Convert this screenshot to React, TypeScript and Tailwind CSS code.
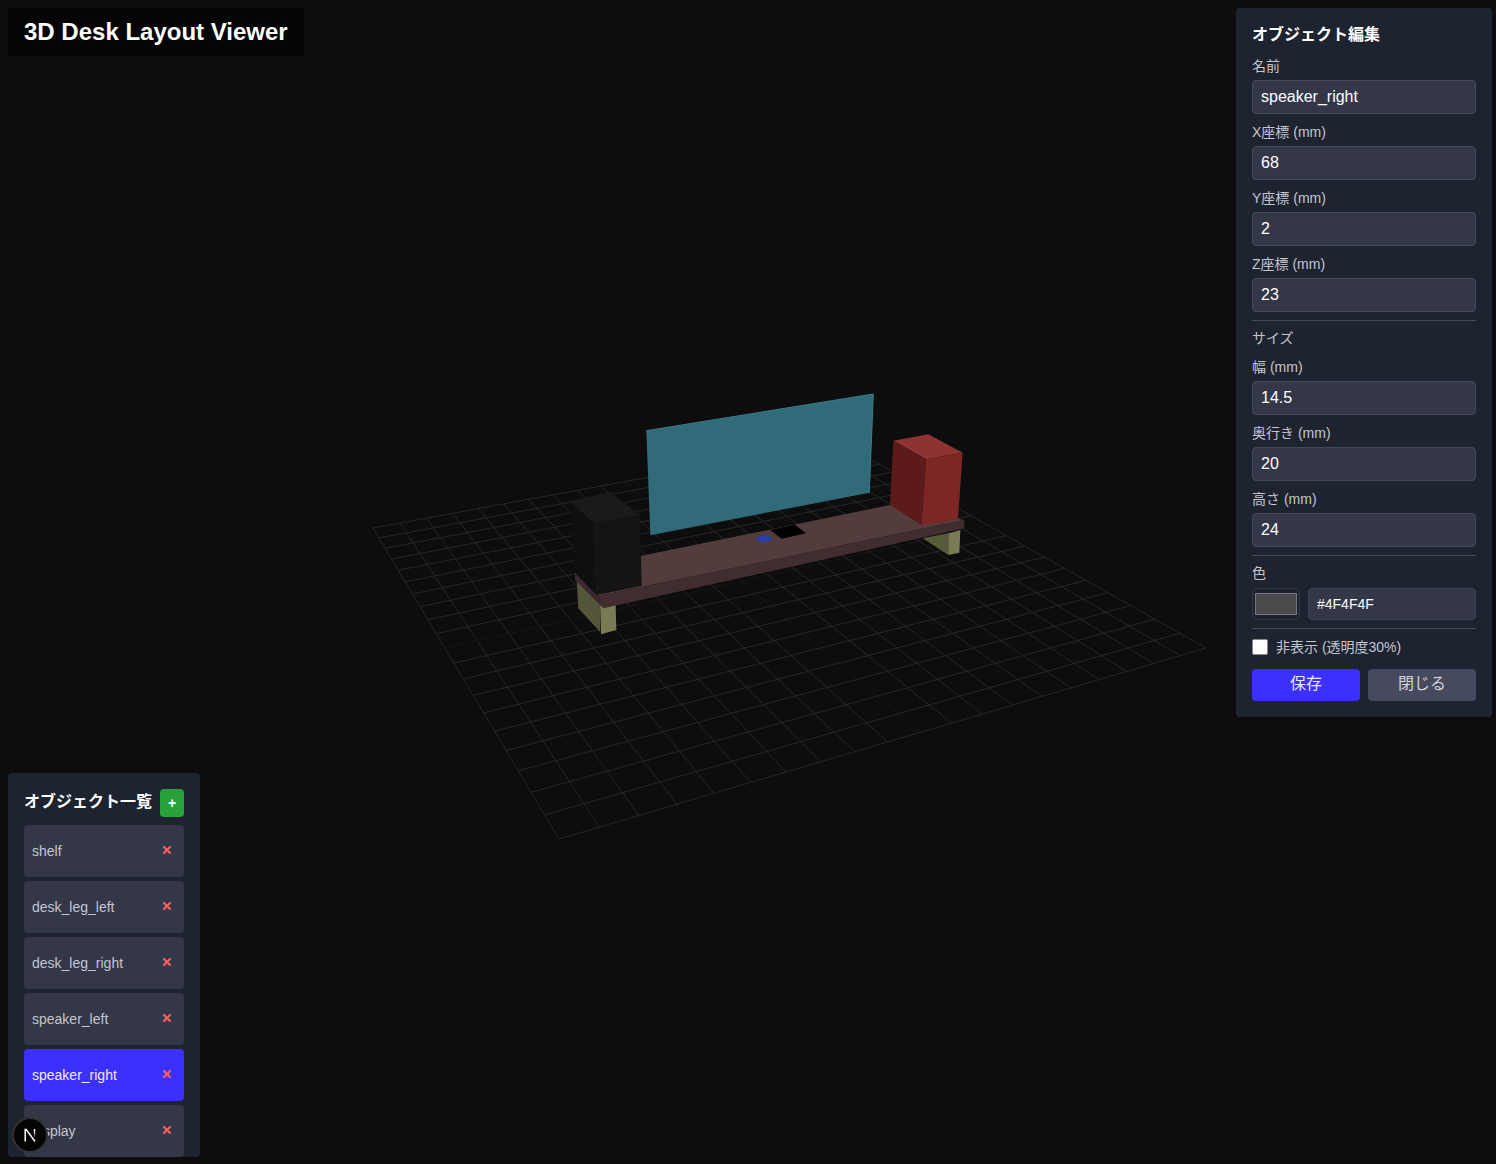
import { X } from "lucide-react";

const objects = ["shelf", "desk_leg_left", "desk_leg_right", "speaker_left", "speaker_right", "display"];

// corners of the floor grid on screen: left, top, right, bottom
const quad = [
  [373, 528],
  [840, 442],
  [1206, 648],
  [559, 839],
];

function makeProjection() {
  const [[x0, y0], [x1, y1], [x2, y2], [x3, y3]] = quad;
  const dx1 = x1 - x2;
  const dx2 = x3 - x2;
  const sx = x0 - x1 + x2 - x3;
  const dy1 = y1 - y2;
  const dy2 = y3 - y2;
  const sy = y0 - y1 + y2 - y3;
  const det = dx1 * dy2 - dx2 * dy1;
  const g = (sx * dy2 - dx2 * sy) / det;
  const h = (dx1 * sy - sx * dy1) / det;
  const a = x1 - x0 + g * x1;
  const b = x3 - x0 + h * x3;
  const d = y1 - y0 + g * y1;
  const e = y3 - y0 + h * y3;
  return (u: number, v: number) => {
    const w = g * u + h * v + 1;
    return [(a * u + b * v + x0) / w, (d * u + e * v + y0) / w];
  };
}

const project = makeProjection();
const divisions = 20;

function Grid() {
  const lines = [];
  for (let i = 0; i <= divisions; i++) {
    const t = i / divisions;
    const stroke = i === divisions / 2 ? "#161616" : "#272727";
    const a = project(t, 0);
    const b = project(t, 1);
    const c = project(0, t);
    const d = project(1, t);
    lines.push(<line key={`u${i}`} x1={a[0]} y1={a[1]} x2={b[0]} y2={b[1]} stroke={stroke} />);
    lines.push(<line key={`v${i}`} x1={c[0]} y1={c[1]} x2={d[0]} y2={d[1]} stroke={stroke} />);
  }
  return <g>{lines}</g>;
}

// shapes below were measured on a 3x crop whose origin is (550,380)
function Face({ pts, fill }: { pts: number[][]; fill: string }) {
  const points = pts.map(([x, y]) => `${550 + x / 3},${380 + y / 3}`).join(" ");
  return <polygon points={points} fill={fill} />;
}

function Scene() {
  return (
    <svg className="absolute inset-0" width={1496} height={1164} viewBox="0 0 1496 1164">
      <Grid />
      {/* monitor */}
      <Face pts={[[289, 152], [970, 42], [958, 338], [301, 466]]} fill="#316a78" />
      <polyline points="646.3,430.7 873.3,394 869.3,492.7" fill="none" stroke="#3a7d8d" strokeWidth="1" />
      {/* legs */}
      <Face pts={[[80, 597], [150, 665], [150, 755], [85, 685]]} fill="#55553a" />
      <Face pts={[[150, 665], [197, 675], [199, 750], [153, 763]]} fill="#7a7a55" />
      <Face pts={[[1118, 475], [1195, 460], [1195, 525]]} fill="#585a3c" />
      <Face pts={[[1195, 460], [1231, 450], [1228, 518], [1195, 525]]} fill="#7a7a55" />
      {/* shelf */}
      <Face pts={[[75, 568], [1020, 375], [1243, 420], [145, 648]]} fill="#533c3c" />
      <Face pts={[[145, 648], [1243, 420], [1243, 445], [160, 685]]} fill="#412d30" />
      <Face pts={[[75, 578], [145, 648], [160, 685], [75, 600]]} fill="#3a2a30" />
      {/* things on the shelf */}
      <Face pts={[[660, 450], [735, 434], [768, 460], [695, 476]]} fill="#000000" />
      <ellipse cx={764} cy={538.7} rx={7.8} ry={3.2} fill="#2a3fa8" />
      {/* speaker_left */}
      <Face pts={[[60, 365], [180, 335], [270, 405], [130, 430]]} fill="#1a1a1a" />
      <Face pts={[[60, 365], [130, 430], [140, 645], [75, 578]]} fill="#0f0f0f" />
      <Face pts={[[130, 430], [270, 405], [275, 617], [140, 645]]} fill="#141414" />
      {/* speaker_right */}
      <Face pts={[[1030, 182], [1135, 163], [1238, 218], [1128, 238]]} fill="#8e3232" />
      <Face pts={[[1030, 182], [1128, 238], [1115, 436], [1020, 375]]} fill="#5c1a1a" />
      <Face pts={[[1128, 238], [1238, 218], [1224, 418], [1115, 436]]} fill="#7d2626" />
    </svg>
  );
}

function Field({ label, value }: { label: string; value: string }) {
  return (
    <div>
      <label className="block text-sm leading-[20px] mb-[4px] text-[#c3c6cf]">{label}</label>
      <input
        readOnly
        value={value}
        className="block w-full h-[34px] px-[8px] rounded-[4px] border border-[#454a5e] bg-[#333748] text-base text-white outline-none"
      />
    </div>
  );
}

function EditPanel() {
  return (
    <div className="absolute top-[8px] right-[4px] w-[256px] h-[709px] p-[16px] rounded-[4px] bg-[#1e2330] text-white">
      <h2 className="text-base font-bold leading-[22px] mb-[10px]">オブジェクト編集</h2>
      <div className="flex flex-col gap-[8px]">
        <Field label="名前" value="speaker_right" />
        <Field label="X座標 (mm)" value="68" />
        <Field label="Y座標 (mm)" value="2" />
        <Field label="Z座標 (mm)" value="23" />
      </div>
      <div className="mt-[8px] border-t border-[#454a5e] pt-[7px]">
        <p className="text-sm leading-[20px] mb-[9px] text-[#c3c6cf]">サイズ</p>
        <div className="flex flex-col gap-[8px]">
          <Field label="幅 (mm)" value="14.5" />
          <Field label="奥行き (mm)" value="20" />
          <Field label="高さ (mm)" value="24" />
        </div>
      </div>
      <div className="mt-[8px] border-t border-[#454a5e] pt-[7px]">
        <p className="text-sm leading-[20px] mb-[5px] text-[#c3c6cf]">色</p>
        <div className="flex gap-[8px]">
          <div className="w-[48px] h-[32px] p-[2px] rounded-[4px] border border-[#333748] flex items-center justify-center">
            <div className="w-[42px] h-[22px] bg-[#4a4a4a] border border-[#76767a]" />
          </div>
          <input
            readOnly
            value="#4F4F4F"
            className="flex-1 min-w-0 h-[32px] px-[8px] rounded-[4px] border border-[#3d4154] bg-[#333748] text-sm text-white outline-none"
          />
        </div>
      </div>
      <div className="mt-[8px] border-t border-[#454a5e] pt-[8px] flex items-center gap-[8px]">
        <span className="w-[16px] h-[16px] rounded-[2px] bg-white border border-[#8a8a8a]" />
        <span className="text-sm leading-[20px] text-[#c3c6cf]">非表示 (透明度30%)</span>
      </div>
      <div className="mt-[12px] flex gap-[8px]">
        <button className="flex-1 h-[32px] pb-[2px] rounded-[4px] bg-[#3b30ff] text-base text-[#e8e8ff]">保存</button>
        <button className="flex-1 h-[32px] pb-[2px] rounded-[4px] bg-[#454a5e] text-base text-[#d2d4da]">閉じる</button>
      </div>
    </div>
  );
}

function ObjectList() {
  return (
    <div className="absolute left-[8px] top-[773px] w-[192px] h-[384px] overflow-hidden pt-[16px] px-[16px] rounded-[4px] bg-[#1e2330]">
      <div className="flex items-center justify-between h-[28px] mb-[8px]">
        <h2 className="text-base font-bold text-white whitespace-nowrap -mt-[2px]">オブジェクト一覧</h2>
        <button className="w-[24px] h-[28px] rounded-[4px] bg-[#28a33a] text-sm font-bold text-white flex items-center justify-center">
          +
        </button>
      </div>
      <div className="flex flex-col gap-[4px]">
        {objects.map((name) => (
          <div
            key={name}
            className={`flex items-center justify-between h-[52px] shrink-0 pl-[8px] pr-[11px] rounded-[4px] text-sm ${
              name === "speaker_right" ? "bg-[#3b30ff] text-[#ececff]" : "bg-[#333748] text-[#c3c6cf]"
            }`}>
            <span>{name}</span>
            <X size={12} strokeWidth={4.5} className="text-[#ec6060] -mt-[2px]" />
          </div>
        ))}
      </div>
    </div>
  );
}

function NextBadge() {
  return (
    <div className="absolute left-[12px] top-[1117px] w-[36px] h-[36px] rounded-full bg-[#050505] border-2 border-[#333333] flex items-center justify-center">
      <svg width="14" height="16" viewBox="0 0 14 16">
        <defs>
          <linearGradient id="nfade" gradientUnits="userSpaceOnUse" x1="0" y1="2" x2="0" y2="11">
            <stop offset="0.2" stopColor="#ffffff" />
            <stop offset="1" stopColor="#ffffff" stopOpacity="0" />
          </linearGradient>
        </defs>
        <path d="M2.2 14.5V2.5h1L12 14.5" fill="none" stroke="#ffffff" strokeWidth="1.5" />
        <path d="M11.5 2v9" fill="none" stroke="url(#nfade)" strokeWidth="1.5" />
      </svg>
    </div>
  );
}

export default function App() {
  return (
    <div className="relative w-[1496px] h-[1164px] overflow-hidden bg-[#0d0d0d] font-['Liberation_Sans','Noto_Sans_CJK_JP',sans-serif]">
      <Scene />
      <h1 className="absolute left-[8px] top-[8px] h-[48px] px-[16px] flex items-center rounded-[4px] bg-[#050505] text-2xl font-bold text-white">
        3D Desk Layout Viewer
      </h1>
      <EditPanel />
      <ObjectList />
      <NextBadge />
    </div>
  );
}
